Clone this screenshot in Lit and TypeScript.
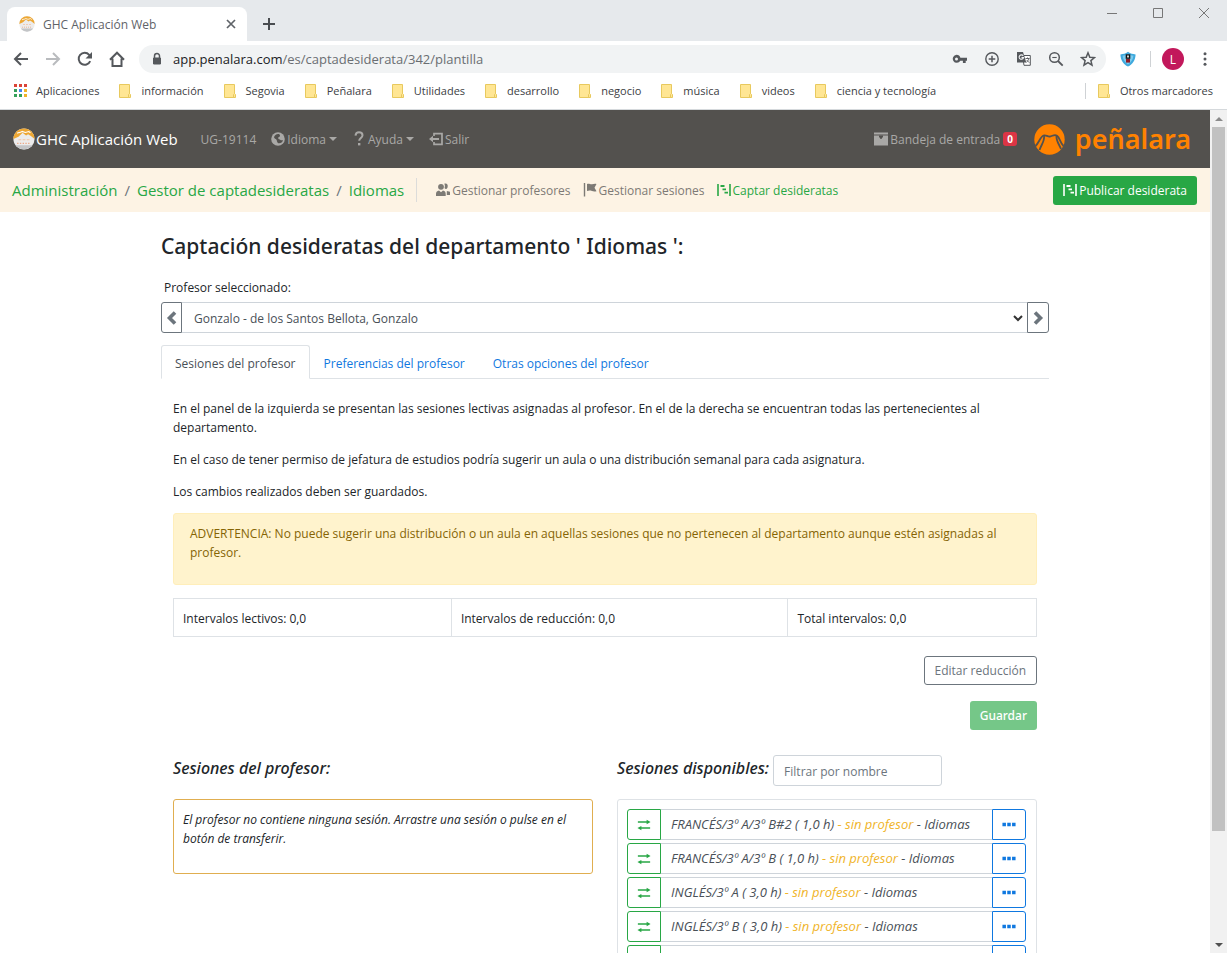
import { LitElement, html, css, svg, nothing } from "lit";
import { customElement } from "lit/decorators.js";

const icons = {
  back: svg`<path d="M15 8H2M8 2L2 8l6 6" fill="none" stroke="currentColor" stroke-width="2"/>`,
  forward: svg`<path d="M1 8h13M8 2l6 6-6 6" fill="none" stroke="currentColor" stroke-width="2"/>`,
  reload: svg`<path d="M13.2 10.2A6 6 0 1 1 12.2 3.8L13.6 5.4" fill="none" stroke="currentColor" stroke-width="2"/><path d="M15 1v6.500H8.500z" fill="currentColor"/>`,
  home: svg`<path d="M1 8.700L8 1.700l7 7M3.500 7.500V15h9V7.500" fill="none" stroke="currentColor" stroke-width="2"/>`,
  lock: svg`<path d="M4.500 7h7v6h-7z" fill="currentColor" stroke="currentColor" stroke-linejoin="round"/><path d="M5.500 7V5a2.500 2.500 0 0 1 5 0v2" fill="none" stroke="currentColor" stroke-width="1.500"/>`,
  key: svg`<path fill="currentColor" fill-rule="evenodd" d="M4.500 3.800a4 4 0 0 1 3.900 2.900H15v3h-1.300v2.200h-2.800V9.700H8.300A4 4 0 1 1 4.500 3.800zm0 2.600a1.500 1.500 0 1 0 0 3 1.500 1.500 0 0 0 0-3z"/>`,
  plus: svg`<circle cx="8" cy="8" r="6.200" fill="none" stroke="currentColor" stroke-width="1.400"/><path d="M8 4.700v6.600M4.700 8h6.600" stroke="currentColor" stroke-width="1.500"/>`,
  translate: svg`<path d="M6.500 4.500H14.300V14.300H8z" fill="#fff" stroke="currentColor"/><path d="M1 1h6l3.300 10.500H1z" fill="currentColor"/><path d="M7.200 4.900A2.200 2.200 0 1 0 7.500 6.600H5.500" fill="none" stroke="#f1f3f4" stroke-width="1.100"/><path d="M9.500 7.500h4M11.500 6.500v1M12.800 7.500c-.5 2-1.500 3-2.500 4M10.800 9.200l2.500 2.500" fill="none" stroke="currentColor" stroke-width=".9"/>`,
  zoomOut: svg`<circle cx="6.500" cy="6.500" r="4.800" fill="none" stroke="currentColor" stroke-width="1.500"/><path d="M10 10l4.700 4.700" stroke="currentColor" stroke-width="1.800"/><path d="M4.300 6.500h4.400" stroke="currentColor" stroke-width="1.100"/>`,
  star: svg`<path d="M8 1.800l1.800 4.400 4.700.4-3.600 3 1.100 4.600L8 11.700l-4 2.500 1.100-4.600-3.600-3 4.700-.4z" fill="none" stroke="currentColor" stroke-width="1.500"/>`,
  shield: svg`<path d="M8 .8c2.500 2 4.700 2.200 7.600 2.600C15.400 9 12.700 13 8 15.600 3.300 13 .6 9 .4 3.400 3.300 3 5.500 2.800 8 .8z" fill="#3fa9dd"/><path d="M8 3c2 1.300 3.500 1.600 5.400 1.800C13 8.500 11 11.600 8 13.600 5 11.600 3 8.500 2.600 4.800 4.500 4.600 6 4.300 8 3z" fill="#7ccbee"/><path d="M5.700 3.300h4.600v4.500H5.700z" fill="#111"/><path d="M7.200 4.600h1.600v2H7.200z" fill="#fff"/><path d="M6 8h4v3.600H6z" fill="#8d1f2a"/>`,
  dots: svg`<circle cx="8" cy="2.800" r="1.500" fill="currentColor"/><circle cx="8" cy="8" r="1.500" fill="currentColor"/><circle cx="8" cy="13.200" r="1.500" fill="currentColor"/>`,
  close: svg`<path d="M4 4l8 8M12 4l-8 8" stroke="currentColor" stroke-width="1.700"/>`,
  add: svg`<path d="M8 2v12M2 8h12" stroke="currentColor" stroke-width="2"/>`,
  winMin: svg`<path d="M3 8.500h10" stroke="currentColor"/>`,
  winMax: svg`<path d="M3.500 3.500h9v9h-9z" fill="none" stroke="currentColor"/>`,
  winClose: svg`<path d="M3 3l10 10M13 3L3 13" stroke="currentColor"/>`,
  folder: svg`<path d="M2.500 1.500h10v13h-10z" fill="#ffe694" stroke="#e8c95e"/><path d="M11.500 14.500v-3q1-2 2 0v3z" fill="#ffe694" stroke="#e8c95e"/>`,
  globe: svg`<circle cx="8" cy="8" r="6.800" fill="currentColor"/><path d="M9 3c-2.500-.4-4.500 1-5 3.300.3 1.500 1.700 1.400 2.500 2.400.6 1 .3 2.500 1.800 3.600 2.300.3 4.200-.8 4.700-3-.9-.3-1.600.4-2.500-.2-.9-.8-2-.6-2.300-1.800C8 6 9.600 6.200 10 5c.1-.9-.4-1.500-1-2z" fill="#53514e"/>`,
  question: svg`<path d="M4.500 4.600C4.700 2.300 6 1.200 8 1.200s3.500 1.200 3.500 3.100c0 2.500-3.300 2.900-3.300 5.500" fill="none" stroke="currentColor" stroke-width="2"/><path d="M7 12h2.400v2.400H7z" fill="currentColor"/>`,
  logout: svg`<path d="M6 5V2.700h8v10.600H6V11" fill="none" stroke="currentColor" stroke-width="1.700"/><path d="M1 8l4-3.200v2.300h6v1.800H5v2.300z" fill="currentColor"/>`,
  inbox: svg`<path d="M1 1.500h14v2H1zM1 4.500h14v10H1z" fill="currentColor"/><path d="M6 4.500h4v2H9v1.300H7V6.500H6z" fill="#53514e"/>`,
  people: svg`<circle cx="6" cy="4.800" r="2.900" fill="currentColor"/><path d="M1 14v-2.200c0-2 1.300-2.800 3-3.200l2 1.600 2-1.600c1.700.4 2.700 1.200 2.700 3.200V14z" fill="currentColor"/><path d="M9.300 1.800c2.500-.9 4 1.200 3.300 3.400-.3 1-1 1.800-1.900 1.900-.5-.2-1-.6-1.200-1 .6-1.500.5-3.100-.2-4.300z" fill="currentColor"/><path d="M11.800 9l3.200.8V13h-3.200z" fill="currentColor"/>`,
  flag: svg`<path d="M2.500 1v13.500" stroke="currentColor" stroke-width="1.400"/><path d="M5 2c2-1 3 .5 5 .3 1.500-.2 2.500-.7 4.500-.3l-2 3.700 2 3.500c-2 .4-3 .4-4.500-.2-2-.7-3.300-.6-5 0z" fill="currentColor"/>`,
  gantt: svg`<path d="M2 2v12M14 2v12" stroke="currentColor" stroke-width="1.600"/><path d="M4.500 4h4M6.500 7.300h3.500M8.500 10.700h3.500" stroke="currentColor" stroke-width="1.800"/>`,
  left: svg`<path d="M11 2.500L5.500 8l5.500 5.500" fill="none" stroke="currentColor" stroke-width="3.600"/>`,
  right: svg`<path d="M5 2.500L10.500 8 5 13.500" fill="none" stroke="currentColor" stroke-width="3.600"/>`,
  swap: svg`<path d="M1 4.500H12M4 11.500h11" stroke="currentColor" stroke-width="1.600"/><path d="M11 2l4.500 2.500L11 7zM5 9L.5 11.500 5 14z" fill="currentColor"/>`,
  more: svg`<path d="M.5 5.500h4v4h-4zM6 5.500h4v4H6zM11.500 5.500h4v4h-4z" fill="currentColor"/>`,
  mountain: svg`<circle cx="8" cy="8" r="7.700" fill="#ececec"/><path d="M.3 8A7.700 7.700 0 0 1 15.700 8L13 5.800 11 4.600 9.500 5.500 7 3.500 4 6.300z" fill="#eda733"/><path d="M3 3.800c1.500-.8 2.500-.3 3.700-1.300l2.300.8 2.500-.7 1.200.9" fill="none" stroke="#fff" stroke-width=".8"/><path d="M4 8.500h8" stroke="#f5c3a0" stroke-width=".8" stroke-dasharray="2 1"/><path d="M3 11.200h10" stroke="#eba988" stroke-width=".8" stroke-dasharray="1 1"/><path d="M1.800 12.500a7.700 7.700 0 0 0 12.400 0z" fill="#c3c5c7"/>`,
  apps: svg`${[0, 1, 2].map((r) => [0, 1, 2].map((c) => svg`<rect x=${2 + c * 5} y=${1 + r * 5} width="3" height="3" fill=${["#db4437", "#db4437", "#db4437", "#34a05a", "#4285f4", "#f0b429", "#34a05a", "#34a05a", "#f0b429"][r * 3 + c]}/>`))}`,
};

const icon = (name: keyof typeof icons, cls = "") =>
  html`<svg class="icon ${cls}" viewBox="0 0 16 16" aria-hidden="true">${icons[name]}</svg>`;

const base = css`
  * { box-sizing: border-box; }
  button, input, select { font: inherit; color: inherit; margin: 0; }
  button { cursor: pointer; padding: 0; border: 0; background: none; }
  a { color: inherit; text-decoration: none; }
  .icon { width: 16px; height: 16px; flex: none; display: block; }
`;

@customElement("browser-chrome")
class BrowserChrome extends LitElement {
  static styles = [base, css`
    :host { display: block; flex: none; color: #3c4043; font-size: 12px; background: #fff; border-bottom: 1px solid #d5d9dc; }
    .strip { height: 41px; background: #e6e9ec; display: flex; align-items: flex-end; padding-left: 7px; }
    .tab { width: 240px; height: 34px; background: #fff; border-radius: 8px 8px 0 0; display: flex; align-items: center; padding: 0 8px 0 12px; color: #5f6368; }
    .tab-title { margin: 0 auto 0 8px; }
    .new-tab { margin: 0 auto 9px 14px; color: #494c50; }
    .window { display: flex; gap: 30px; align-self: flex-start; padding: 5px 15px 0 0; color: #777; }
    .toolbar { height: 36px; display: flex; align-items: center; color: #55585c; padding-left: 13px; }
    .nav { display: flex; gap: 16px; margin-right: 14px; }
    .off { color: #b9bbbe; }
    .omnibox { flex: 1; height: 28px; border-radius: 14px; background: #f1f3f4; display: flex; align-items: center; padding: 0 10px; }
    .url { font-size: 13px; margin: 0 auto 0 8px; color: #6a6e72; }
    .host { color: #202124; }
    .actions { display: flex; gap: 16px; }
    .after { display: flex; align-items: center; padding: 0 14px; }
    .sep { width: 1px; height: 16px; background: #cfd2d5; }
    .after .sep { margin: 0 11px 0 14px; }
    .avatar { width: 22px; height: 22px; border-radius: 50%; background: #c2185b; color: #fff; margin-right: 13px; display: grid; place-items: center; }
    .bookmarks { height: 32px; display: flex; align-items: center; gap: 18px; padding: 0 14px 5px 12px; font-size: 11px; }
    .bookmark { display: flex; align-items: center; gap: 8px; white-space: nowrap; }
    .other { margin-left: auto; display: flex; align-items: center; gap: 10px; }
  `];
  render() {
    return html`
      <div class="strip">
        <div class="tab">${icon("mountain")}<span class="tab-title">GHC Aplicación Web</span><button aria-label="Cerrar pestaña">${icon("close")}</button></div>
        <button class="new-tab" aria-label="Nueva pestaña">${icon("add")}</button>
        <div class="window">
          <button aria-label="Minimizar">${icon("winMin")}</button>
          <button aria-label="Maximizar">${icon("winMax")}</button>
          <button aria-label="Cerrar">${icon("winClose")}</button>
        </div>
      </div>
      <div class="toolbar">
        <div class="nav">
          <button aria-label="Atrás">${icon("back")}</button>
          <button class="off" aria-label="Adelante">${icon("forward")}</button>
          <button aria-label="Recargar">${icon("reload")}</button>
          <button aria-label="Inicio">${icon("home")}</button>
        </div>
        <div class="omnibox">
          ${icon("lock")}
          <span class="url"><span class="host">app.penalara.com</span>/es/captadesiderata/342/plantilla</span>
          <div class="actions">
            <button aria-label="Contraseñas">${icon("key")}</button>
            <button aria-label="Añadir">${icon("plus")}</button>
            <button aria-label="Traducir">${icon("translate")}</button>
            <button aria-label="Zoom">${icon("zoomOut")}</button>
            <button aria-label="Favorito">${icon("star")}</button>
          </div>
        </div>
        <div class="after">
          <button aria-label="Extensión">${icon("shield")}</button>
          <span class="sep"></span>
          <button class="avatar" aria-label="Perfil">L</button>
          <button aria-label="Menú">${icon("dots")}</button>
        </div>
      </div>
      <div class="bookmarks">
        <a class="bookmark" href="#">${icon("apps")}Aplicaciones</a>
        ${["información", "Segovia", "Peñalara", "Utilidades", "desarrollo", "negocio", "música", "videos", "ciencia y tecnología"].map(
          (b) => html`<a class="bookmark" href="#">${icon("folder")}${b}</a>`)}
        <div class="other"><span class="sep"></span><a class="bookmark" href="#">${icon("folder")}Otros marcadores</a></div>
      </div>`;
  }
}

@customElement("site-header")
class SiteHeader extends LitElement {
  static styles = [base, css`
    :host { display: block; }
    .navbar { height: 58px; background: #53514e; color: #a9a8a6; display: flex; align-items: center; padding: 0 19px 0 13px; white-space: nowrap; }
    .brand { display: flex; align-items: center; gap: 1px; color: #fff; font-size: 15px; margin-right: 23px; }
    .brand .icon { width: 22px; height: 22px; }
    .links { display: flex; align-items: center; gap: 11px; }
    .navbar .links { gap: 14px; }
    .link { display: flex; align-items: center; gap: 1px; }
    .caret { border: 4px solid transparent; border-top-color: currentColor; border-bottom: 0; margin-left: 2px; }
    .inbox { margin-left: auto; }
    .badge { background: #dc3545; color: #fff; font-size: 10px; line-height: 14px; font-weight: 700; border-radius: 3px; padding: 0 4px; margin-left: 2px; }
    .logo { display: flex; align-items: center; gap: 10px; margin-left: 17px; color: #ff8200; font: 600 27px/40px "Noto Sans", sans-serif; }
    .logo-mark { width: 31px; height: 31px; display: block; }
    .subbar { height: 44px; background: #fdf3e4; display: flex; align-items: center; padding: 0 13px 0 12px; white-space: nowrap; color: #7d7a75; }
    .crumbs { display: flex; gap: 7px; font-size: 15px; color: #6c757d; padding-right: 12px; border-right: 1px solid #dcdcda; line-height: 24px; margin-right: 18px; }
    .crumbs a, .active { color: #28a745; }
    .publish { margin-left: auto; background: #28a745; color: #fff; border-radius: 3px; height: 29px; padding: 0 10px 0 9px; display: flex; align-items: center; gap: 1px; }
  `];
  render() {
    return html`
      <nav class="navbar">
        <a class="brand" href="#">${icon("mountain")}GHC Aplicación Web</a>
        <div class="links">
          <span>UG-19114</span>
          <a class="link" href="#">${icon("globe")}Idioma<i class="caret"></i></a>
          <a class="link" href="#">${icon("question")}Ayuda<i class="caret"></i></a>
          <a class="link" href="#">${icon("logout")}Salir</a>
        </div>
        <a class="link inbox" href="#">${icon("inbox")}Bandeja de entrada<span class="badge">0</span></a>
        <a class="logo" href="#">
          <svg class="logo-mark" viewBox="0 0 31 31" aria-hidden="true">
            <circle cx="15.500" cy="15.500" r="15.200" fill="#ff8200"/>
            <path d="M1.500 22C5 19 6 13 9.500 11.500c2.500-1 4 1.500 6.500 1 2.500-.4 4.500-2.500 7-.8 3 2 3 7.300 6.500 10.300" fill="none" stroke="#53514e" stroke-width="1.800"/>
            <path d="M10 12c1 5-3 9-4.500 14M22.500 12c-.5 5 3 9 4.500 13" fill="none" stroke="#53514e" stroke-width="1.800"/>
          </svg>peñalara</a>
      </nav>
      <div class="subbar">
        <div class="crumbs"><a href="#">Administración</a>/<a href="#">Gestor de captadesideratas</a>/<a href="#">Idiomas</a></div>
        <div class="links">
          <a class="link" href="#">${icon("people")}Gestionar profesores</a>
          <a class="link" href="#">${icon("flag")}Gestionar sesiones</a>
          <a class="link active" href="#">${icon("gantt")}Captar desideratas</a>
        </div>
        <button class="publish">${icon("gantt")}Publicar desiderata</button>
      </div>`;
  }
}

const sessions = [
  { name: "FRANCÉS/3º A/3º B#2 ( 1,0 h)", dept: "Idiomas" },
  { name: "FRANCÉS/3º A/3º B ( 1,0 h)", dept: "Idiomas" },
  { name: "INGLÉS/3º A ( 3,0 h)", dept: "Idiomas" },
  { name: "INGLÉS/3º B ( 3,0 h)", dept: "Idiomas" },
  { name: "", dept: "" },
];

@customElement("teacher-form")
class TeacherForm extends LitElement {
  static styles = [base, css`
    :host { display: block; max-width: 888px; margin: 0 auto; color: #212529; line-height: 19px; }
    h1 { font: 500 21px/26px "Noto Sans", sans-serif; margin: 21px 0 19px; }
    h2 { font: italic 500 16px/18px "Noto Sans", sans-serif; margin: 0; }
    p { margin: 0 0 13px; }
    .label { display: block; margin: 0 3px 5px; }
    .picker { display: flex; height: 31px; margin-bottom: 12px; }
    .step { width: 21px; border: 1px solid #6c757d; color: #6c757d; display: grid; place-items: center; }
    .prev { border-radius: 3px 0 0 3px; }
    .next { width: 22px; border-radius: 0 3px 3px 0; }
    .select-wrap { flex: 1; display: grid; align-items: center; border: solid #ced4da; border-width: 1px 0; color: #495057; }
    select { grid-area: 1 / 1; width: 100%; height: 100%; appearance: none; border: 0; background: none; padding: 2px 12px 0; }
    .select-arrow { grid-area: 1 / 1; justify-self: end; pointer-events: none; width: 10px; height: 10px; margin-right: 4px; color: #333; }
    .tabs { display: flex; border-bottom: 1px solid #dee2e6; height: 34px; }
    .tabs button { height: 34px; padding: 2px 13px 0; border: 1px solid transparent; color: #0f78e0; border-radius: 3px 3px 0 0; }
    .tabs .current { color: #495057; background: #fff; border-color: #dee2e6 #dee2e6 #fff; }
    .panel { padding: 20px 12px 0; }
    .warning { background: #fff3cd; border: 1px solid #ffeeba; color: #856404; border-radius: 3px; padding: 10px 16px 22px; margin-top: -1px; min-height: 72px; }
    table { width: 100%; border-collapse: collapse; margin: 13px 0 19px; }
    td { border: 1px solid #dee2e6; padding: 10px 9px 8px; }
    .c1 { width: 32.2%; } .c2 { width: 39%; }
    .buttons { display: flex; flex-direction: column; align-items: flex-end; gap: 16px; }
    .btn { height: 29px; border-radius: 3px; padding: 0 10px; }
    .outline { border: 1px solid #6c757d; color: #6c757d; }
    .save { background: #75c788; color: #fff; font-family: "Noto Sans", sans-serif; font-weight: 500; }
    .columns { display: grid; grid-template-columns: 1fr 1fr; gap: 0 24px; padding-top: 25px; font-style: italic; }
    .head { height: 31px; display: flex; align-items: center; gap: 4px; margin-bottom: 13px; }
    .head h2 { margin-bottom: 5px; }
    .filter { width: 169px; height: 31px; border: 1px solid #ced4da; border-radius: 3px; padding: 2px 10px 0; font-style: normal; }
    .filter::placeholder { color: #6c757d; opacity: 1; }
    .empty { border: 1px solid #e0ae50; border-radius: 3px; padding: 10px 9px 24px; min-height: 75px; }
    .list { border: 1px solid #dee2e6; border-radius: 3px; padding: 9px 10px 9px 9px; display: grid; gap: 3px; margin: 0; list-style: none; font-size: 13px; }
    .row { display: flex; height: 31px; color: #495057; }
    .row button { width: 34px; border: 1px solid; display: grid; place-items: center; }
    .row .transfer { color: #28a745; border-radius: 3px 0 0 3px; }
    .row .options { color: #0f78e0; border-radius: 0 3px 3px 0; }
    .text { flex: 1; border: solid #ced4da; border-width: 1px 0; padding: 5px 10px; white-space: nowrap; }
    .none { color: #f0b429; }
    .transfer .icon, .options .icon { width: 14px; height: 14px; }
  `];
  render() {
    return html`
      <h1>Captación desideratas del departamento ' Idiomas ':</h1>
      <label class="label" for="teacher">Profesor seleccionado:</label>
      <div class="picker">
        <button class="step prev" aria-label="Anterior">${icon("left")}</button>
        <div class="select-wrap">
          <select id="teacher"><option>Gonzalo - de los Santos Bellota, Gonzalo</option></select>
          <svg class="select-arrow" viewBox="0 0 10 10" aria-hidden="true"><path d="M1 3l4 4 4-4" fill="none" stroke="currentColor" stroke-width="2"/></svg>
        </div>
        <button class="step next" aria-label="Siguiente">${icon("right")}</button>
      </div>
      <div class="tabs" role="tablist">
        <button class="current" role="tab" aria-selected="true">Sesiones del profesor</button>
        <button role="tab">Preferencias del profesor</button>
        <button role="tab">Otras opciones del profesor</button>
      </div>
      <div class="panel">
        <p>En el panel de la izquierda se presentan las sesiones lectivas asignadas al profesor. En el de la derecha se encuentran todas las pertenecientes al departamento.</p>
        <p>En el caso de tener permiso de jefatura de estudios podría sugerir un aula o una distribución semanal para cada asignatura.</p>
        <p>Los cambios realizados deben ser guardados.</p>
        <div class="warning">ADVERTENCIA: No puede sugerir una distribución o un aula en aquellas sesiones que no pertenecen al departamento aunque estén asignadas al profesor.</div>
        <table><tbody><tr>
          <td class="c1">Intervalos lectivos: 0,0</td>
          <td class="c2">Intervalos de reducción: 0,0</td>
          <td>Total intervalos: 0,0</td>
        </tr></tbody></table>
        <div class="buttons">
          <button class="btn outline">Editar reducción</button>
          <button class="btn save">Guardar</button>
        </div>
        <div class="columns">
          <section>
            <div class="head"><h2>Sesiones del profesor:</h2></div>
            <div class="empty">El profesor no contiene ninguna sesión. Arrastre una sesión o pulse en el botón de transferir.</div>
          </section>
          <section>
            <div class="head"><h2>Sesiones disponibles:</h2><input class="filter" type="text" placeholder="Filtrar por nombre" aria-label="Filtrar por nombre"></div>
            <ul class="list">
              ${sessions.map((s) => html`<li class="row">
                <button class="transfer" aria-label="Transferir">${icon("swap")}</button>
                <span class="text">${s.name ? html`${s.name} <span class="none">- sin profesor</span> - ${s.dept}` : nothing}</span>
                <button class="options" aria-label="Opciones">${icon("more")}</button>
              </li>`)}
            </ul>
          </section>
        </div>
      </div>`;
  }
}

@customElement("app-root")
class AppRoot extends LitElement {
  static styles = [base, css`
    :host { display: flex; flex-direction: column; height: 100vh; overflow: hidden; background: #fff; font-family: "Open Sans", "Noto Sans", sans-serif; font-size: 12px; }
    .view { flex: 1; min-height: 0; display: flex; }
    .page { flex: 1; min-width: 0; overflow: hidden; }
    .scrollbar { width: 17px; background: #f1f1f1; display: flex; flex-direction: column; align-items: center; }
    .arrow { height: 17px; width: 17px; display: grid; place-items: center; }
    .tri { border: 4px solid transparent; border-bottom-color: #8b8b8b; border-top: 0; }
    .down .tri { border: 4px solid transparent; border-top-color: #505050; border-bottom: 0; }
    .track { flex: 1; width: 13px; }
    .thumb { height: 87%; background: #c1c1c1; }
  `];
  render() {
    return html`
      <browser-chrome></browser-chrome>
      <div class="view">
        <main class="page"><site-header></site-header><teacher-form></teacher-form></main>
        <div class="scrollbar" aria-hidden="true">
          <span class="arrow"><i class="tri"></i></span>
          <div class="track"><div class="thumb"></div></div>
          <span class="arrow down"><i class="tri"></i></span>
        </div>
      </div>`;
  }
}
